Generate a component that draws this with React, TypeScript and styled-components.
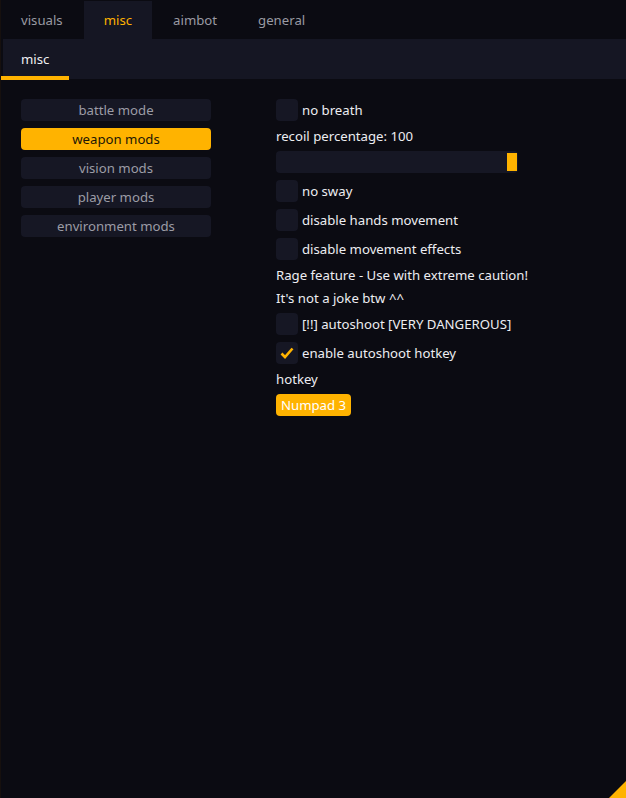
import React from "react";
import styled, { createGlobalStyle } from "styled-components";

const ORANGE = "#ffb300";
const FRAME = "#161724";

const Global = createGlobalStyle`
  html, body {
    margin: 0;
    padding: 0;
    background: #0b0b12;
  }
  body {
    font-family: "Noto Sans", "Open Sans", sans-serif;
    font-size: 13.2px;
  }
`;

const Window = styled.div`
  position: relative;
  width: 626px;
  height: 798px;
  background: #0b0b12;
  border-left: 1px solid #16100e;
  box-sizing: border-box;
  overflow: hidden;
  color: #ededf1;
`;

const TabBar = styled.div`
  display: flex;
  height: 39px;
  padding-top: 1px;
  box-sizing: border-box;
`;

const Tab = styled.div<{ $active?: boolean }>`
  display: flex;
  align-items: center;
  padding: 0 20px 0 20px;
  margin-right: 1px;
  color: ${(p) => (p.$active ? ORANGE : "#9a9aa3")};
  background: ${(p) => (p.$active ? "#151623" : "transparent")};
`;

const SubBar = styled.div`
  height: 40px;
  margin-left: 2px;
  background: #151623;
  display: flex;
  align-items: stretch;
`;

const SubTab = styled.div`
  position: relative;
  display: flex;
  align-items: center;
  padding: 0 20px;
  margin-left: -2px;
  color: #f0f0f2;
  &::after {
    content: "";
    position: absolute;
    left: 0;
    right: 0;
    bottom: -1px;
    height: 4px;
    background: ${ORANGE};
  }
`;

const Body = styled.div`
  display: grid;
  grid-template-columns: 190px 1fr;
  column-gap: 65px;
  padding: 20px 20px;
`;

const Column = styled.div`
  display: flex;
  flex-direction: column;
  align-items: flex-start;
  gap: 7px;
`;

const SideButton = styled.div<{ $active?: boolean }>`
  width: 190px;
  height: 22px;
  border-radius: 4px;
  display: flex;
  align-items: center;
  justify-content: center;
  background: ${(p) => (p.$active ? ORANGE : FRAME)};
  color: ${(p) => (p.$active ? "#1c1606" : "#9c9ca6")};
`;

const Row = styled.div`
  display: flex;
  align-items: center;
  gap: 4px;
  height: 22px;
`;

const Box = styled.div`
  width: 22px;
  height: 22px;
  border-radius: 4px;
  background: ${FRAME};
  display: flex;
  align-items: center;
  justify-content: center;
`;

const Label = styled.div`
  line-height: 16px;
`;

const Slider = styled.div`
  position: relative;
  width: 242px;
  height: 22px;
  border-radius: 4px;
  background: ${FRAME};
`;

const Grab = styled.div`
  position: absolute;
  right: 1px;
  top: 2px;
  width: 10px;
  height: 18px;
  background: ${ORANGE};
`;

const KeyButton = styled.div`
  height: 22px;
  padding: 0 5px;
  border-radius: 4px;
  background: ${ORANGE};
  color: #ffffff;
  display: flex;
  align-items: center;
`;

const Grip = styled.svg`
  position: absolute;
  right: 0;
  bottom: 0;
`;

const Check = ({ on }: { on?: boolean }) => (
  <Box>
    {on && (
      <svg width="16" height="16" viewBox="0 0 16 16">
        <polyline
          points="2.5,8.5 6,12 13.5,3.5"
          fill="none"
          stroke={ORANGE}
          strokeWidth="2.6"
        />
      </svg>
    )}
  </Box>
);

const CheckRow = ({ label, on }: { label: string; on?: boolean }) => (
  <Row>
    <Check on={on} />
    <Label>{label}</Label>
  </Row>
);

const App = (): JSX.Element => (
  <Window>
    <Global />
    <TabBar>
      <Tab>visuals</Tab>
      <Tab $active>misc</Tab>
      <Tab>aimbot</Tab>
      <Tab>general</Tab>
    </TabBar>
    <SubBar>
      <SubTab>misc</SubTab>
    </SubBar>
    <Body>
      <Column>
        <SideButton>battle mode</SideButton>
        <SideButton $active>weapon mods</SideButton>
        <SideButton>vision mods</SideButton>
        <SideButton>player mods</SideButton>
        <SideButton>environment mods</SideButton>
      </Column>
      <Column>
        <CheckRow label="no breath" />
        <Label>recoil percentage: 100</Label>
        <Slider>
          <Grab />
        </Slider>
        <CheckRow label="no sway" />
        <CheckRow label="disable hands movement" />
        <CheckRow label="disable movement effects" />
        <Label>Rage feature - Use with extreme caution!</Label>
        <Label>It's not a joke btw ^^</Label>
        <CheckRow label="[!!] autoshoot [VERY DANGEROUS]" />
        <CheckRow label="enable autoshoot hotkey" on />
        <Label>hotkey</Label>
        <KeyButton>Numpad 3</KeyButton>
      </Column>
    </Body>
    <Grip width="17" height="17" viewBox="0 0 17 17">
      <polygon points="17,0 17,17 0,17" fill={ORANGE} />
    </Grip>
  </Window>
);

export default App;
